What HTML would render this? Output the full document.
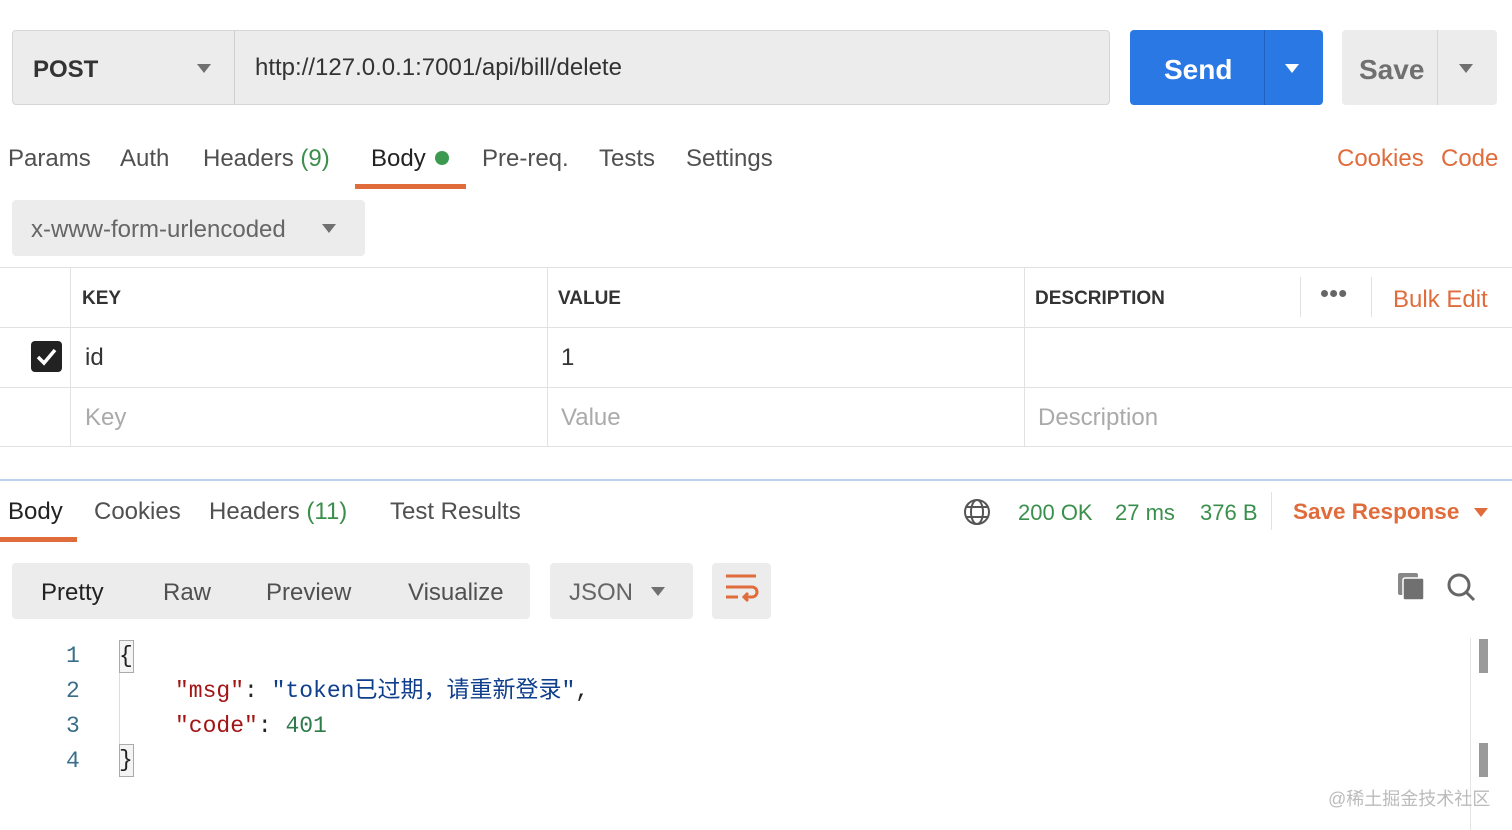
<!DOCTYPE html>
<html><head><meta charset="utf-8"><style>
*{margin:0;padding:0;box-sizing:border-box}
body{width:1512px;height:830px;background:#fff;position:relative;overflow:hidden;font-family:"Liberation Sans","Noto Sans CJK SC",sans-serif;color:#505050}
.a{position:absolute;white-space:nowrap}
.t{font-size:24px;line-height:28px}
.tri{position:absolute;width:0;height:0;border-left:7px solid transparent;border-right:7px solid transparent;border-top:9px solid #707070}
.mono{font-family:"Liberation Mono","Noto Sans CJK SC",monospace;font-size:23px;line-height:30px}
</style></head><body>
<div class="a" style="left:12px;top:30px;width:1098px;height:75px;background:#ececec;border:1px solid #d6d6d6;border-radius:4px"></div>
<div class="a" style="left:234px;top:30px;width:1px;height:75px;background:#d0d0d0"></div>
<div class="a t" style="left:33px;top:56px;font-weight:bold;color:#333">POST</div>
<div class="tri" style="left:197px;top:64px"></div>
<div class="a t" style="left:255px;top:54px;color:#333">http://127.0.0.1:7001/api/bill/delete</div>
<div class="a" style="left:1130px;top:30px;width:193px;height:75px;background:#2a78e4;border-radius:4px"></div>
<div class="a" style="left:1264px;top:30px;width:1px;height:75px;background:#1f62c4"></div>
<div class="a" style="left:1164px;top:53px;font-size:28px;line-height:34px;color:#fff;font-weight:bold">Send</div>
<div class="tri" style="left:1285px;top:64px;border-top-color:#fff"></div>
<div class="a" style="left:1342px;top:30px;width:155px;height:75px;background:#ececec;border-radius:4px"></div>
<div class="a" style="left:1437px;top:30px;width:1px;height:75px;background:#d6d6d6"></div>
<div class="a" style="left:1359px;top:53px;font-size:28px;line-height:34px;color:#707070;font-weight:bold">Save</div>
<div class="tri" style="left:1459px;top:64px"></div>
<div class="a t" style="left:8px;top:145px">Params</div>
<div class="a t" style="left:120px;top:145px">Auth</div>
<div class="a t" style="left:203px;top:145px">Headers <span style="color:#3b8f4c">(9)</span></div>
<div class="a t" style="left:371px;top:145px;color:#222">Body</div>
<div class="a" style="left:435px;top:151px;width:14px;height:14px;border-radius:50%;background:#3b9a50"></div>
<div class="a" style="left:355px;top:184px;width:111px;height:5px;background:#e06c3c"></div>
<div class="a t" style="left:482px;top:145px">Pre-req.</div>
<div class="a t" style="left:599px;top:145px">Tests</div>
<div class="a t" style="left:686px;top:145px">Settings</div>
<div class="a t" style="left:1337px;top:145px;color:#e06c3c">Cookies</div>
<div class="a t" style="left:1441px;top:145px;color:#e06c3c">Code</div>
<div class="a" style="left:12px;top:200px;width:353px;height:56px;background:#ececec;border-radius:4px"></div>
<div class="a t" style="left:31px;top:216px;color:#666">x-www-form-urlencoded</div>
<div class="tri" style="left:322px;top:224px"></div>
<div class="a" style="left:0;top:267px;width:1512px;height:1px;background:#e2e2e2"></div>
<div class="a" style="left:0;top:327px;width:1512px;height:1px;background:#e2e2e2"></div>
<div class="a" style="left:0;top:387px;width:1512px;height:1px;background:#e2e2e2"></div>
<div class="a" style="left:0;top:446px;width:1512px;height:1px;background:#e2e2e2"></div>
<div class="a" style="left:70px;top:267px;width:1px;height:180px;background:#e2e2e2"></div>
<div class="a" style="left:547px;top:267px;width:1px;height:180px;background:#e2e2e2"></div>
<div class="a" style="left:1024px;top:267px;width:1px;height:180px;background:#e2e2e2"></div>
<div class="a" style="left:1300px;top:277px;width:1px;height:40px;background:#e2e2e2"></div>
<div class="a" style="left:1371px;top:277px;width:1px;height:40px;background:#e2e2e2"></div>
<div class="a" style="left:82px;top:288px;font-size:19px;font-weight:bold;color:#333">KEY</div>
<div class="a" style="left:558px;top:288px;font-size:19px;font-weight:bold;color:#333">VALUE</div>
<div class="a" style="left:1035px;top:288px;font-size:19px;font-weight:bold;color:#333">DESCRIPTION</div>
<div class="a" style="left:1321px;top:290px;width:10px;height:10px;border-radius:50%;background:#666;box-shadow:13px 0 #666,26px 0 #666;transform:scale(.7);transform-origin:0 0"></div>
<div class="a t" style="left:1393px;top:286px;color:#e06c3c">Bulk Edit</div>
<div class="a" style="left:31px;top:341px;width:31px;height:31px;border-radius:4px;background:#222"></div>
<svg class="a" style="left:31px;top:341px" width="31" height="31"><path d="M7 16 L13 22 L24 9" stroke="#fff" stroke-width="3.5" fill="none"/></svg>
<div class="a t" style="left:85px;top:344px;color:#333">id</div>
<div class="a t" style="left:561px;top:344px;color:#333">1</div>
<div class="a t" style="left:85px;top:404px;color:#aaa">Key</div>
<div class="a t" style="left:561px;top:404px;color:#aaa">Value</div>
<div class="a t" style="left:1038px;top:404px;color:#aaa">Description</div>
<div class="a" style="left:0;top:479px;width:1512px;height:2px;background:#bcd3f0"></div>
<div class="a t" style="left:8px;top:498px;color:#222">Body</div>
<div class="a" style="left:0;top:537px;width:77px;height:5px;background:#e06c3c"></div>
<div class="a t" style="left:94px;top:498px">Cookies</div>
<div class="a t" style="left:209px;top:498px">Headers <span style="color:#3b8f4c">(11)</span></div>
<div class="a t" style="left:390px;top:498px">Test Results</div>
<svg class="a" style="left:962px;top:497px" width="30" height="30" fill="none" stroke="#555" stroke-width="2"><circle cx="15" cy="15" r="12"/><ellipse cx="15" cy="15" rx="6" ry="12"/><path d="M4 10H26M4 20H26"/></svg>
<div class="a" style="left:1018px;top:499px;font-size:22px;line-height:28px;color:#3b8f4c">200 OK</div>
<div class="a" style="left:1115px;top:499px;font-size:22px;line-height:28px;color:#3b8f4c">27 ms</div>
<div class="a" style="left:1200px;top:499px;font-size:22px;line-height:28px;color:#3b8f4c">376 B</div>
<div class="a" style="left:1271px;top:492px;width:1px;height:38px;background:#e2e2e2"></div>
<div class="a" style="left:1293px;top:498px;font-size:22.5px;line-height:28px;color:#e06c3c;font-weight:bold">Save Response</div>
<div class="tri" style="left:1474px;top:508px;border-top-color:#e06c3c"></div>
<div class="a" style="left:12px;top:563px;width:518px;height:56px;background:#ececec;border-radius:4px"></div>
<div class="a t" style="left:41px;top:579px;color:#222">Pretty</div>
<div class="a t" style="left:163px;top:579px">Raw</div>
<div class="a t" style="left:266px;top:579px">Preview</div>
<div class="a t" style="left:408px;top:579px">Visualize</div>
<div class="a" style="left:550px;top:563px;width:143px;height:56px;background:#ececec;border-radius:4px"></div>
<div class="a t" style="left:569px;top:579px;color:#666">JSON</div>
<div class="tri" style="left:651px;top:587px"></div>
<div class="a" style="left:712px;top:563px;width:59px;height:56px;background:#ececec;border-radius:4px"></div>
<svg class="a" style="left:712px;top:563px" width="59" height="56" fill="none" stroke="#e06c3c" stroke-width="3"><path d="M14 13H44M14 24H40a5 5 0 0 1 0 10H32M36 30l-4 4 4 4M14 34H26"/></svg>
<svg class="a" style="left:1397px;top:572px" width="30" height="30"><rect x="1" y="1" width="20" height="22" rx="2" fill="#888"/><rect x="6" y="6" width="21" height="22" rx="2" fill="#707070" stroke="#fff" stroke-width="1.5"/></svg>
<svg class="a" style="left:1446px;top:572px" width="32" height="32" fill="none" stroke="#666" stroke-width="3"><circle cx="13" cy="13" r="10"/><path d="M20 20L28 28"/></svg>
<div class="a mono" style="left:66px;top:641px;color:#3a6e8a;text-align:right">1<br><span style="display:block;margin-top:5px">2</span><span style="display:block;margin-top:5px">3</span><span style="display:block;margin-top:5px">4</span></div>
<div class="a" style="left:119px;top:672px;width:1px;height:72px;background:#ddd"></div>
<div class="a" style="left:119px;top:640px;width:15px;height:33px;border:1px solid #aaa;background:#f4f4f4"></div>
<div class="a" style="left:119px;top:744px;width:15px;height:33px;border:1px solid #aaa;background:#f4f4f4"></div>
<div class="a mono" style="left:119px;top:641px;color:#222">{</div>
<div class="a mono" style="left:175px;top:676px"><span style="color:#a31515">"msg"</span><span style="color:#222">: </span><span style="color:#0f3f8c">"token已过期，请重新登录"</span><span style="color:#222">,</span></div>
<div class="a mono" style="left:175px;top:711px"><span style="color:#a31515">"code"</span><span style="color:#222">: </span><span style="color:#2f7a4a">401</span></div>
<div class="a mono" style="left:119px;top:745px;color:#222">}</div>
<div class="a" style="left:1470px;top:638px;width:1px;height:192px;background:#e5e5e5"></div>
<div class="a" style="left:1479px;top:639px;width:9px;height:34px;background:#9a9a9a"></div>
<div class="a" style="left:1479px;top:743px;width:9px;height:34px;background:#9a9a9a"></div>
<div class="a" style="left:1328px;top:785px;font-size:18px;color:#bbb">@稀土掘金技术社区</div>
</body></html>
